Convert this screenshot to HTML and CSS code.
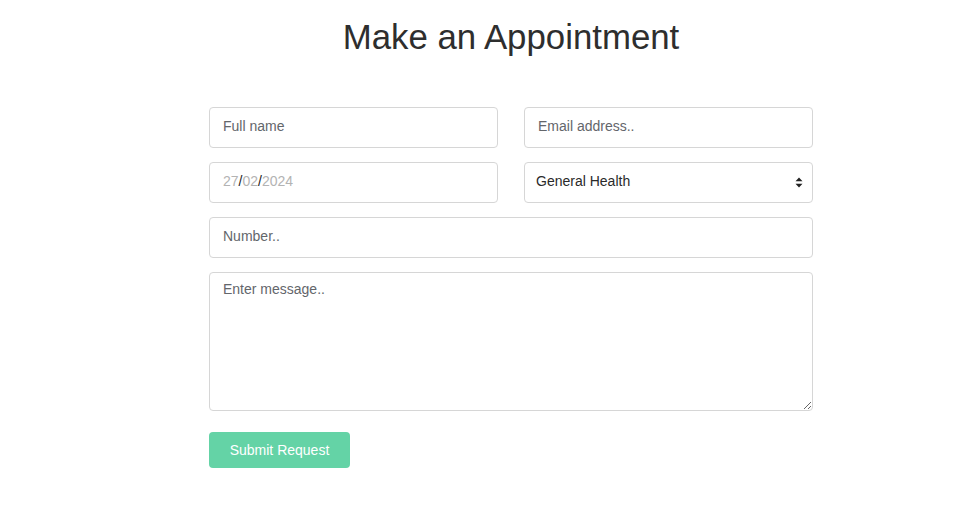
FILE: index.html
```html
<!DOCTYPE html>
<html lang="en">
<head>
<meta charset="utf-8">
<title>Make an Appointment</title>
<link rel="stylesheet" href="styles.css">
</head>
<body>
<main class="page">
  <h1 class="title">Make an Appointment</h1>
  <form class="form">
    <div class="row two">
      <input class="field" type="text" placeholder="Full name">
      <input class="field" type="email" placeholder="Email address..">
    </div>
    <div class="row two">
      <div class="field date"><span class="dp">27</span><span class="ds">/</span><span class="dp">02</span><span class="ds">/</span><span class="dp">2024</span></div>
      <div class="select-wrap">
        <select class="field select">
          <option>General Health</option>
        </select>
        <svg class="select-arrows" width="8" height="11" viewBox="0 0 8 11"><path d="M4 0.5 L7.5 4.3 L0.5 4.3 Z M4 10.5 L7.5 6.7 L0.5 6.7 Z" fill="#222"/></svg>
      </div>
    </div>
    <div class="row">
      <input class="field" type="text" placeholder="Number..">
    </div>
    <div class="row">
      <textarea class="field message" placeholder="Enter message.."></textarea>
    </div>
    <div class="actions">
      <button type="button" class="submit">Submit Request</button>
    </div>
  </form>
</main>
</body>
</html>
```

FILE: styles.css
```css
* { box-sizing: border-box; }
html, body { margin: 0; padding: 0; background: #fff; }
body {
  font-family: "Liberation Sans", Arial, Helvetica, sans-serif;
  color: #333;
}
.page {
  width: 604px;
  margin-left: 209px;
  padding-top: 16px;
}
.title {
  margin: 0 0 50px;
  font-size: 34.8px;
  line-height: 41px;
  font-weight: 400;
  text-align: center;
  color: #2e2e2e;
}
.form {
  display: flex;
  flex-direction: column;
}
.row {
  display: grid;
  grid-template-columns: minmax(0, 1fr);
  margin-bottom: 14px;
}
.row.two {
  grid-template-columns: minmax(0, 1fr) minmax(0, 1fr);
  column-gap: 26px;
}
.field {
  display: block;
  width: 100%;
  height: 41px;
  border: 1px solid #d6d6d6;
  border-radius: 4px;
  padding: 0 13px 3px;
  font-family: "Liberation Sans", Arial, Helvetica, sans-serif;
  font-size: 14px;
  color: #333;
  background: #fff;
  outline: none;
  margin: 0;
}
.field::placeholder { color: #63666b; opacity: 1; }
.date {
  display: flex;
  align-items: center;
  padding-bottom: 3px;
}
.dp { color: #b3b3b3; }
.ds { color: #222; }
.select-wrap { position: relative; }
.select {
  appearance: none;
  -webkit-appearance: none;
  padding: 0 11px 3px;
  color: #2a2a2a;
}
.select-arrows {
  position: absolute;
  right: 10px;
  top: 15px;
  pointer-events: none;
}
.message {
  height: 139px;
  padding: 7px 13px;
  resize: vertical;
  line-height: 18px;
}
.actions {
  margin-top: 7px;
}
.submit {
  width: 141px;
  height: 36px;
  border: none;
  border-radius: 4px;
  background: #64d3a6;
  color: #fff;
  font-family: "Liberation Sans", Arial, Helvetica, sans-serif;
  font-size: 14px;
  padding: 0 0 1px;
  cursor: pointer;
}
```
